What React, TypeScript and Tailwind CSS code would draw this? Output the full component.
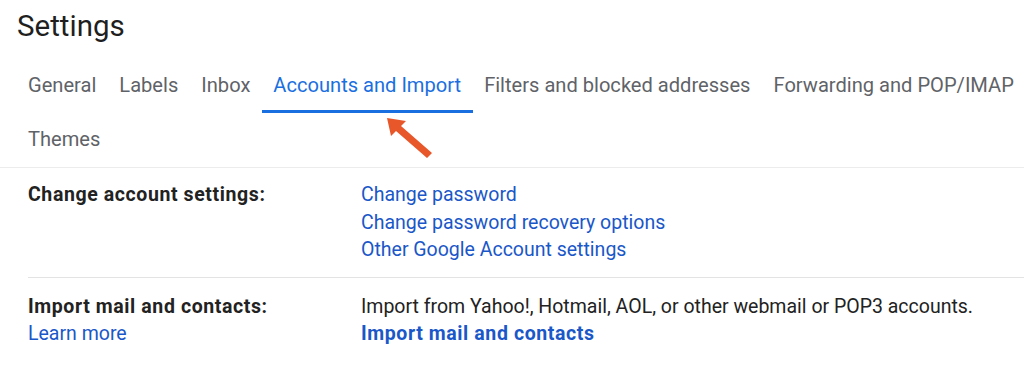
const TAB_ROWS = [
  ['General', 'Labels', 'Inbox', 'Accounts and Import', 'Filters and blocked addresses', 'Forwarding and POP/IMAP'],
  ['Themes'],
]

const ACTIVE = 'Accounts and Import'

function Arrow() {
  return (
    <svg
      className="pointer-events-none absolute left-[384px] top-[115px]"
      width="52"
      height="46"
      viewBox="0 0 52 46"
    >
      <path d="M3 3 L22 6 L17 11 L48 38 L43 43 L12 16 L7 21 Z" fill="#e8572a" />
    </svg>
  )
}

export default function App() {
  return (
    <div
      className="relative h-[374px] w-[1024px] overflow-hidden bg-white"
      style={{ fontFamily: 'Roboto, "Liberation Sans", sans-serif' }}
    >
      {/* Header */}
      <h1 className="pl-[17px] pt-[6px] text-[29.5px] leading-[40px] text-[#1f1f1f]">Settings</h1>

      {/* Tabs */}
      <div className="mt-[13px] flex flex-col pl-[16.5px]">
        {TAB_ROWS.map((row, i) => (
          <div key={i} className="flex whitespace-nowrap">
            {row.map((tab) => (
              <div
                key={tab}
                className={`flex h-[54px] shrink-0 items-center border-b-[3px] px-[11.5px] pt-[1px] text-[20.1px] ${
                  tab === ACTIVE ? 'border-[#1a6fe0] text-[#1a6fe0]' : 'border-transparent text-[#5f6368]'
                }`}
              >
                {tab}
              </div>
            ))}
          </div>
        ))}
      </div>

      <Arrow />

      <div className="border-t border-[#ececec]">
        {/* Change account settings */}
        <div className="ml-[28px] flex border-b border-[#e3e3e3] pb-[13px] pt-[13px] text-[19.5px] leading-[27.5px]">
          <div className="w-[333px] font-bold tracking-[0.6px] text-[#222]">Change account settings:</div>
          <div className="flex flex-col text-[#1a57c8]">
            <a>Change password</a>
            <a>Change password recovery options</a>
            <a>Other Google Account settings</a>
          </div>
        </div>

        {/* Import mail */}
        <div className="ml-[28px] flex pt-[15px] text-[19.5px] leading-[27.5px]">
          <div className="flex w-[333px] flex-col">
            <span className="font-bold tracking-[0.6px] text-[#222]">Import mail and contacts:</span>
            <a className="text-[#1a57c8]">Learn more</a>
          </div>
          <div className="flex flex-col">
            <span className="text-[#222]">Import from Yahoo!, Hotmail, AOL, or other webmail or POP3 accounts.</span>
            <a className="font-bold tracking-[0.6px] text-[#1a57c8]">Import mail and contacts</a>
          </div>
        </div>
      </div>
    </div>
  )
}
